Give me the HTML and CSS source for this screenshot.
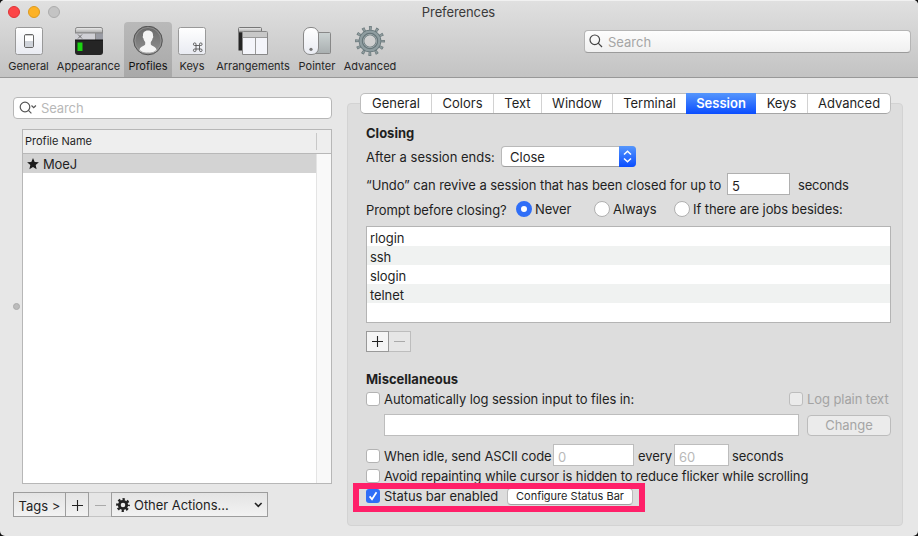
FILE: index.html
```html
<!DOCTYPE html>
<html lang="en">
<head>
<meta charset="utf-8">
<title>Preferences</title>
<link rel="stylesheet" href="styles.css">
</head>
<body>
<div class="window">
  <header class="chrome">
    <div class="titlebar">
      <div class="lights"><i class="light red"></i><i class="light amber"></i><i class="light off"></i></div>
      <h1 class="title">Preferences</h1>
    </div>
    <div class="toolbar">
      <nav class="tools">
        <div class="tool t-general">
          <svg width="30" height="30" viewBox="0 0 30 30"><defs><linearGradient id="key" x2="0" y2="1"><stop stop-color="#fff"/><stop offset="1" stop-color="#e9ebf2"/></linearGradient></defs><rect x="1.5" y="1.5" width="27" height="27" rx="2" fill="url(#key)" stroke="#999"/><rect x="10.500" y="8.500" width="9" height="13" rx="1.500" fill="#fff" stroke="#666"/><path d="M11 15h8v4.500q0 1.500-1.500 1.500h-5q-1.500 0-1.500-1.500z" fill="#cfd3da"/><path d="M11 9.500h8" stroke="#ccc"/></svg>
          <span>General</span>
        </div>
        <div class="tool t-appearance">
          <svg width="30" height="30" viewBox="0 0 30 30"><defs><linearGradient id="bar" x2="0" y2="1"><stop stop-color="#eee"/><stop offset="1" stop-color="#aaa"/></linearGradient></defs><path d="M1 14h28v12q0 3-3 3H4q-3 0-3-3z" fill="#252525"/><path d="M3 1.500h24q1.500 0 1.500 2V7h-27V3.500q0-2 1.500-2z" fill="url(#bar)" stroke="#888"/><path d="M1 7h20v7H1z" fill="#d0d0d5"/><path d="M21 7h8v7h-8z" fill="#999ba3"/><path d="M1 7h28M21.500 7v7" stroke="#888" fill="none"/><path d="M1 14h28" stroke="#111"/><path d="M4 8.500l4 4m0-4l-4 4" stroke="#555" stroke-width=".8"/><path d="M3.500 16.500h5v8.500h-5z" fill="#1bd411"/></svg>
          <span>Appearance</span>
        </div>
        <div class="tool t-profiles active">
          <svg width="30" height="30" viewBox="0 0 30 30"><defs><linearGradient id="disc" x2="0" y2="1"><stop stop-color="#686868"/><stop offset="1" stop-color="#929292"/></linearGradient><clipPath id="cut"><circle cx="15" cy="14.500" r="13.500"/></clipPath></defs><circle cx="15" cy="14.500" r="14.300" fill="url(#disc)" stroke="#555"/><path clip-path="url(#cut)" d="M15 4.500c3.700 0 5.300 2.300 5 5.500.5.300.4 1.800-.4 2.300-.3 1.900-1 3-1.800 3.700v2.300c0 1.700 4.800 2.100 5.600 5l.6 1.800A13.500 13.500 0 0 1 15 26.500a13.500 13.500 0 0 1-9-1.400l.6-1.800c.8-2.900 5.600-3.300 5.600-5V16c-.8-.7-1.500-1.800-1.800-3.700-.8-.5-.9-2-.4-2.300-.3-3.200 1.300-5.500 5-5.500z" fill="#f4f4f4"/><circle cx="15" cy="14.500" r="13" fill="none" stroke="#999" stroke-width=".7"/></svg>
          <span>Profiles</span>
        </div>
        <div class="tool t-keys">
          <svg width="30" height="30" viewBox="0 0 30 30"><rect x="1.500" y="1.500" width="27" height="27" rx="2" fill="url(#key)" stroke="#999"/><path d="M19 19.500h3.500v3.500H19zM19 19.500h-1.300a1.300 1.300 0 1 1 1.300-1.300zM22.500 19.500v-1.300a1.300 1.300 0 1 1 1.300 1.300zM22.500 23h1.300a1.300 1.300 0 1 1-1.300 1.300zM19 23v1.300a1.300 1.300 0 1 1-1.300-1.300z" fill="none" stroke="#555" stroke-width=".9"/></svg>
          <span>Keys</span>
        </div>
        <div class="tool t-arrange">
          <svg width="32" height="30" viewBox="0 0 32 30"><path d="M1.500 5h23v19.500h-23z" fill="#252525"/><path d="M2.500 1.500h21q1 0 1 1V6h-23V2.500q0-1 1-1z" fill="url(#bar)" stroke="#777"/><path d="M6.500 5.500h23q1 0 1 1v22h-25v-22q0-1 1-1z" fill="#f4f5fa" stroke="#888"/><path d="M6 6h24v5H6z" fill="#c8c8c8"/><path d="M6 11.500h24M18.500 11v17" stroke="#999"/></svg>
          <span>Arrangements</span>
        </div>
        <div class="tool t-pointer">
          <svg width="30" height="30" viewBox="0 0 30 30"><defs><linearGradient id="pad" x2="0" y2="1"><stop stop-color="#ccd3d3"/><stop offset="1" stop-color="#a9afb0"/></linearGradient></defs><rect x="12.500" y="6.500" width="16" height="21" rx="1" fill="url(#pad)" stroke="#888"/><rect x="1.500" y="1.500" width="15" height="27" rx="6.500" fill="url(#key)" stroke="#888"/><circle cx="9" cy="23.300" r="1.600" fill="#777"/></svg>
          <span>Pointer</span>
        </div>
        <div class="tool t-advanced">
          <svg width="30" height="30" viewBox="0 0 30 30"><g fill="none"><circle cx="15" cy="15" r="12.800" stroke="#69777a" stroke-width="4.200" stroke-dasharray="2.800 3.902" stroke-dashoffset="1.400"/><circle cx="15" cy="15" r="12.500" stroke="#8e9b9d" stroke-width="3.400" stroke-dasharray="1.600 4.945" stroke-dashoffset=".8"/><circle cx="15" cy="15" r="8.500" stroke="#657478" stroke-width="5.600"/><circle cx="15" cy="15" r="9.400" stroke="#8f9da0" stroke-width="2.400"/><circle cx="15" cy="15" r="6.700" stroke="#a0acae" stroke-width=".9"/></g></svg>
          <span>Advanced</span>
        </div>
      </nav>
      <div class="search top-search">
        <svg width="14" height="14" viewBox="0 0 14 14" fill="none" stroke="#444" stroke-width="1.200"><circle cx="5.800" cy="5.800" r="4.800"/><path d="M9.200 9.200l3.800 3.800"/></svg>
        <span>Search</span>
      </div>
    </div>
  </header>

  <main class="content">
    <aside class="sidebar">
      <div class="search side-search">
        <svg width="18" height="14" viewBox="0 0 18 14" fill="none" stroke="#555" stroke-width="1.200"><circle cx="6" cy="6" r="4.800"/><path d="M9.400 9.400l3 3M12.500 4.500l2.200 2.200 2.200-2.200"/></svg>
        <span>Search</span>
      </div>
      <div class="split">
        <i class="grip"></i>
        <div class="profiles">
          <div class="thead"><span>Profile Name</span></div>
          <div class="tbody">
            <div class="rows"><div class="profile"><svg width="12" height="12" viewBox="0 0 12 12"><path d="M6 .1l1.700 3.800 4.200.4-3.200 2.800.9 4.200L6 9.100l-3.600 2.200.9-4.200L.1 4.300l4.200-.4z" fill="#1c1c1c"/></svg><span>MoeJ</span></div></div>
            <div class="track"></div>
          </div>
        </div>
      </div>
      <div class="actions">
        <div class="act tags"><span>Tags &gt;</span></div>
        <div class="act add"><svg width="12" height="12" viewBox="0 0 12 12"><path d="M1 6.500h11M6.500 1v11" stroke="#222" stroke-width="1.100"/></svg></div>
        <div class="act remove"><svg width="12" height="12" viewBox="0 0 12 12"><path d="M1 6.500h11" stroke="#aaa"/></svg></div>
        <div class="act other">
          <svg width="14" height="14" viewBox="0 0 14 14" fill="none" stroke="#222"><circle cx="7" cy="7" r="3.700" stroke-width="2.800"/><circle cx="7" cy="7" r="5.700" stroke-width="2.400" stroke-dasharray="2.300 2.177" stroke-dashoffset="1.150"/></svg>
          <span>Other Actions...</span>
          <svg class="chev" width="9" height="6" viewBox="0 0 9 6"><path d="M1 1l3.300 3.300L7.600 1" fill="none" stroke="#222" stroke-width="1.600"/></svg>
        </div>
      </div>
    </aside>

    <section class="panel">
      <nav class="tabs">
        <span class="tab w1">General</span><span class="tab w2">Colors</span><span class="tab w3">Text</span><span class="tab w4">Window</span><span class="tab w5">Terminal</span><span class="tab w6 selected">Session</span><span class="tab w7">Keys</span><span class="tab w8">Advanced</span>
      </nav>
      <h2 class="closing-head">Closing</h2>
      <div class="row after">
        <span class="label after-label">After a session ends:</span>
        <div class="select"><span>Close</span><i><svg width="9" height="13" viewBox="0 0 9 13"><path d="M1 4.500L4.500 1.200 8 4.500M1 8.500l3.500 3.300L8 8.500" fill="none" stroke="#fff" stroke-width="1.500"/></svg></i></div>
      </div>
      <div class="row undo">
        <span class="label undo-label">“Undo” can revive a session that has been closed for up to</span>
        <div class="field five">5</div>
        <span class="label">seconds</span>
      </div>
      <div class="row prompt">
        <span class="label prompt-label">Prompt before closing?</span>
        <i class="radio on"></i><span class="label never">Never</span>
        <i class="radio"></i><span class="label always">Always</span>
        <i class="radio"></i><span class="label jobs">If there are jobs besides:</span>
      </div>
      <div class="jobs-list"><div>rlogin</div><div>ssh</div><div>slogin</div><div>telnet</div></div>
      <div class="pair">
        <div class="sq"><svg width="11" height="11" viewBox="0 0 11 11"><path d="M0 5.500h11M5.500 0v11" stroke="#222" stroke-width="1.100"/></svg></div>
        <div class="sq dim"><svg width="11" height="11" viewBox="0 0 11 11"><path d="M0 5.500h11" stroke="#aaa"/></svg></div>
      </div>
      <h2 class="misc-head">Miscellaneous</h2>
      <div class="row auto">
        <i class="check"></i><span class="label auto-label">Automatically log session input to files in:</span>
        <i class="check faded"></i><span class="label plain">Log plain text</span>
      </div>
      <div class="row path"><div class="field path-field"></div><div class="button change">Change</div></div>
      <div class="row idle">
        <i class="check"></i><span class="label idle-label">When idle, send ASCII code</span>
        <div class="field code">0</div><span class="label every">every</span>
        <div class="field sixty">60</div><span class="label idle-seconds">seconds</span>
      </div>
      <div class="row avoid"><i class="check"></i><span class="label avoid-label">Avoid repainting while cursor is hidden to reduce flicker while scrolling</span></div>
      <div class="row status">
        <i class="check checked"><svg width="14" height="14" viewBox="0 0 14 14"><path d="M3.600 7.400l2.400 2.900 4.500-7" fill="none" stroke="#fff" stroke-width="1.700"/></svg></i>
        <span class="label status-label">Status bar enabled</span>
        <div class="button configure">Configure Status Bar</div>
        <div class="highlight"></div>
      </div>
    </section>
  </main>
</div>
</body>
</html>
```
FILE: styles.css
```css
* { box-sizing: border-box; }
body {
  margin: 0;
  background: #111;
  font: 13px/16px Inter, "Liberation Sans", sans-serif;
  color: #1f1f1f;
}
h1, h2 { margin: 0; font-size: 13px; }
svg { display: block; flex: none; }
span { white-space: nowrap; }
.window {
  width: 918px;
  height: 536px;
  border-radius: 5px;
  overflow: hidden;
  background: #e7e7e7;
}
.chrome {
  height: 78px;
  background: linear-gradient(#e0e0e0, #c3c3c3);
  border-top: 1px solid #f1f1f1;
  border-bottom: 1px solid #989898;
}
.titlebar { height: 21px; display: flex; align-items: center; }
.lights { display: flex; gap: 8px; padding-left: 8px; }
.light { width: 12px; height: 12px; border-radius: 50%; border: 1px solid; }
.red { background: #fc4648; border-color: #df3437; }
.amber { background: #fdb225; border-color: #dd9a1e; }
.off { background: #c4c4c4; border-color: #acacac; }
.title {
  flex: 1;
  padding-right: 61px;
  text-align: center;
  font-weight: 400;
  letter-spacing: -0.1px;
  color: #3a3a3a;
}
.toolbar { display: flex; height: 55px; justify-content: space-between; padding-right: 7px; }
.tools { display: flex; padding-left: 4px; }
.tool {
  display: flex;
  flex-direction: column;
  align-items: center;
  padding-top: 4px;
  border-radius: 4px 4px 0 0;
  font-size: 11px;
  color: #262626;
}
.tool span { margin-top: 2px; line-height: 16px; }
.tool.active { background: linear-gradient(#b9b9b9, #a9a9a9); color: #111; }
.t-general { width: 49px; }
.t-appearance { width: 71px; }
.t-profiles { width: 48px; }
.t-keys { width: 40px; }
.t-arrange { width: 82px; }
.t-pointer { width: 46px; }
.t-advanced { width: 60px; }
.search {
  display: flex;
  align-items: center;
  border-radius: 4px;
  color: #a5a5a5;
}
.top-search {
  width: 327px;
  height: 23px;
  margin-top: 8px;
  padding-left: 4px;
  gap: 5px;
  background: linear-gradient(#fdfdfd, #f0f0f0);
  border: 1px solid #b5b5b5;
  border-bottom-color: #9b9b9b;
}
.top-search svg { margin-bottom: 1px; }
.content { display: flex; height: 458px; }
.sidebar { width: 347px; padding: 19px 15px 0 13px; }
.side-search {
  height: 22px;
  padding-left: 5px;
  gap: 4px;
  letter-spacing: -0.1px;
  background: #fff;
  border: 1px solid #b7b7b7;
  color: #b8b8b8;
}
.split { display: flex; align-items: center; margin-top: 10px; }
.grip { width: 7px; height: 7px; margin-right: 2px; border-radius: 50%; background: #bcbcbc; border: 1px solid #ababab; }
.profiles { width: 310px; height: 355px; border: 1px solid #b7b7b7; background: #fff; }
.thead {
  height: 24px;
  padding: 3px 14px 0 2px;
  font-size: 11px;
  line-height: 16px;
  background: linear-gradient(#c8c8c8, #c8c8c8) 293px 3px / 1px 17px no-repeat #eee;
  border-bottom: 1px solid #b8b8b8;
}
.tbody { display: flex; height: 329px; }
.rows { flex: 1; }
.track { width: 15px; background: #f9f9f9; border-left: 1px solid #e4e4e4; }
.profile { display: flex; align-items: center; gap: 4px; height: 19px; padding: 1px 0 0 4px; letter-spacing: -0.15px; background: #d3d3d3; }
.actions { display: flex; height: 25px; margin-top: 8px; }
.act {
  display: flex;
  align-items: center;
  justify-content: center;
  border: 1px solid #9d9d9d;
  background: linear-gradient(#e4e4e4, #f2f2f2);
}
.tags { width: 53px; padding-top: 2px; }
.add { width: 23px; border-left: 0; }
.remove { width: 22px; border-left: 0; border-right: 0; border-color: #c4c4c4; background: #e6e6e6; }
.other { width: 157px; justify-content: flex-start; padding-left: 4px; gap: 4px; }
.other span { padding-top: 1px; letter-spacing: -0.05px; }
.chev { margin-left: auto; margin-right: 4px; }

.panel {
  width: 556px;
  height: 423px;
  margin-top: 25px;
  padding-left: 18px;
  border: 1px solid #d3d3d3;
  border-radius: 4px;
  background: #dddddd;
}
.tabs {
  display: flex;
  width: 531px;
  height: 21px;
  margin: -11px 0 0 -6px;
  border: 1px solid #bdbdbd;
  border-bottom-color: #a5a5a5;
  border-radius: 5px;
  background: #fff;
}
.tab { height: 19px; line-height: 19px; text-align: center; border-right: 1px solid #d2d2d2; }
.w1 { width: 71px; }
.w2 { width: 62px; }
.w3 { width: 48px; }
.w4 { width: 71px; }
.w5 { width: 73px; border-right: 0; }
.w6 { width: 70px; }
.w7 { width: 52px; }
.w8 { width: 82px; border-right: 0; }
.tab.selected {
  height: 21px;
  margin-top: -1px;
  line-height: 21px;
  border: 0;
  color: #fff;
  font-weight: 600;
  background: linear-gradient(#5596fc, #0a4dff);
}
.closing-head { height: 20px; margin-top: 9px; line-height: 20px; font-weight: 700; }
.row { display: flex; align-items: center; }
.label { flex: none; letter-spacing: -0.08px; }
.field {
  flex: none;
  height: 22px;
  padding: 2px 0 0 4px;
  line-height: 20px;
  border: 1px solid #b0b0b0;
  background: #fff;
}
.after { height: 22px; margin-top: 3px; }
.after-label { width: 135px; letter-spacing: 0; }
.select {
  display: flex;
  justify-content: space-between;
  width: 135px;
  height: 21px;
  margin-bottom: 1px;
  padding-left: 8px;
  line-height: 20px;
  border: 1px solid #b9b9b9;
  border-bottom-color: #9e9e9e;
  border-radius: 4px;
  background: #fff;
}
.select i {
  display: flex;
  align-items: center;
  justify-content: center;
  width: 17px;
  height: 21px;
  margin: -1px -1px 0 0;
  border-radius: 0 4px 4px 0;
  background: linear-gradient(#5596fc, #0a4dff);
}
.undo { height: 22px; margin-top: 5px; }
.undo .label { padding-top: 2px; }
.undo .label:last-child { letter-spacing: -0.2px; }
.undo-label { width: 361px; }
.five { width: 63px; margin-right: 8px; }
.prompt { height: 18px; margin-top: 5px; }
.prompt-label { width: 150px; padding-top: 1px; }
.radio { flex: none; width: 16px; height: 16px; margin-right: 3px; border: 1px solid #b0b0b0; border-radius: 50%; background: #fff; }
.radio.on { border: 5px solid #2f6ef7; }
.never { width: 59px; }
.always { width: 61px; }
.jobs-list { width: 525px; height: 97px; margin-top: 8px; border: 1px solid #b4b4b4; background: #fff; }
.jobs-list div { height: 19px; padding: 2px 0 0 3px; line-height: 19px; letter-spacing: -0.08px; }
.jobs-list div:nth-child(even) { background: #f0f2f1; }
.pair { display: flex; margin-top: 8px; }
.sq { display: flex; align-items: center; justify-content: center; width: 23px; height: 21px; border: 1px solid #999; background: #f5f5f5; }
.sq.dim { width: 22px; border-color: #bdbdbd; border-left: 0; background: #e6e6e6; }
.misc-head { height: 20px; margin-top: 18px; line-height: 19px; font-weight: 700; }
.check { flex: none; width: 14px; height: 14px; margin-right: 4px; border: 1px solid #b3b3b3; border-radius: 3px; background: #fff; }
.check.faded { background: #ebebeb; border-color: #bdbdbd; }
.check.checked { border: 0; background: #2f6ef7; }
.auto { height: 18px; }
.auto-label { width: 405px; }
.plain { color: #a3a3a3; }
.path { height: 22px; margin: 6px 0 0 18px; }
.path-field { width: 415px; margin-right: 8px; border-color: #bdbdbd; }
.button {
  text-align: center;
  background: #fff;
  border: 1px solid #bcbcbc;
  border-bottom-color: #a2a2a2;
  border-radius: 4px;
}
.change { width: 84px; height: 21px; margin-top: 1px; line-height: 19px; color: #a5a5a5; background: #ebebeb; border-color: #bcbcbc; }
.idle { height: 22px; margin-top: 8px; }
.idle .check { margin-top: 2px; }
.idle .label { padding-top: 2px; }
.idle-label { width: 169px; }
.idle .idle-label { letter-spacing: -0.12px; }
.idle .field { color: #b9b9b9; border-color: #bdbdbd; }
.code { width: 81px; }
.every { width: 40px; padding-left: 4px; }
.sixty { width: 55px; }
.idle-seconds.label { padding-left: 3px; letter-spacing: -0.1px; }
.avoid { height: 18px; margin-top: 1px; }
.label.avoid-label { letter-spacing: -0.115px; }
.status { position: relative; height: 18px; margin-top: 2px; }
.status-label { width: 123px; }
.configure { width: 126px; height: 17px; font-size: 11px; line-height: 15px; }
.highlight { position: absolute; left: -13px; top: -4px; width: 292px; height: 29px; border: 6px solid #ff2069; }
```
